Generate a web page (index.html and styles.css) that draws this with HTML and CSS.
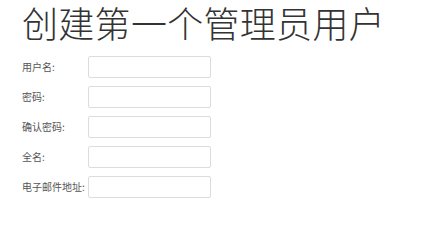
FILE: index.html
```html
<!DOCTYPE html>
<html lang="zh-CN">
<head>
<meta charset="utf-8">
<title>创建第一个管理员用户</title>
<link rel="stylesheet" href="styles.css">
</head>
<body>
<div class="page">
  <h1 class="title">创建第一个管理员用户</h1>
  <form class="form">
    <div class="row"><label class="label">用户名:</label><input class="field" type="text"></div>
    <div class="row"><label class="label">密码:</label><input class="field" type="password"></div>
    <div class="row"><label class="label">确认密码:</label><input class="field" type="password"></div>
    <div class="row"><label class="label">全名:</label><input class="field" type="text"></div>
    <div class="row"><label class="label">电子邮件地址:</label><input class="field" type="text"></div>
  </form>
</div>
</body>
</html>
```

FILE: styles.css
```css
html, body {
  margin: 0;
  padding: 0;
  background: #ffffff;
}
.page {
  padding: 0 22px;
  font-family: "Liberation Sans", "Noto Sans CJK SC", sans-serif;
  color: #333333;
}
.title {
  margin: 0;
  font-family: "Noto Sans CJK SC", sans-serif;
  font-weight: 300;
  font-size: 36px;
  line-height: 44px;
  letter-spacing: 0.3px;
  color: #333333;
}
.form {
  display: flex;
  flex-direction: column;
  gap: 8px;
  margin-top: 12px;
}
.row {
  display: flex;
  align-items: center;
}
.label {
  width: 66px;
  font-size: 10px;
  line-height: 14px;
  color: #555555;
  font-family: "Noto Sans CJK SC", sans-serif;
}
.field {
  box-sizing: border-box;
  width: 123px;
  height: 22px;
  margin: 0;
  padding: 2px 4px;
  border: 1px solid #dcdcdc;
  border-radius: 2px;
  background: #ffffff;
  outline: none;
}
```
